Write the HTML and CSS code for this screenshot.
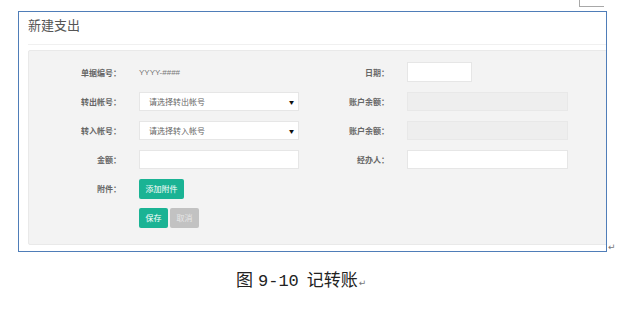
FILE: index.html
```html
<!DOCTYPE html>
<html lang="zh-CN">
<head>
    <meta charset="UTF-8">
    <title>记转账</title>
    <link rel="stylesheet" href="styles.css">
</head>
<body>
    <div class="doc">
        <div class="corner-mark"></div>

        <div class="figure-line">
            <div class="figure">
                <div class="card-title">新建支出</div>
                <div class="panel">
                    <div class="form-grid">
                        <div class="label">单据编号<span class="colon">：</span></div>
                        <div class="value">YYYY-####</div>
                        <div class="label">日期<span class="colon">：</span></div>
                        <div><div class="input input-short"></div></div>

                        <div class="label">转出帐号<span class="colon">：</span></div>
                        <div class="input select">请选择转出帐号<span class="caret">▼</span></div>
                        <div class="label">账户余额<span class="colon">：</span></div>
                        <div class="input disabled"></div>

                        <div class="label">转入帐号<span class="colon">：</span></div>
                        <div class="input select">请选择转入帐号<span class="caret">▼</span></div>
                        <div class="label">账户余额<span class="colon">：</span></div>
                        <div class="input disabled"></div>

                        <div class="label">金额<span class="colon">：</span></div>
                        <div class="input"></div>
                        <div class="label">经办人<span class="colon">：</span></div>
                        <div class="input"></div>

                        <div class="label">附件<span class="colon">：</span></div>
                        <div class="btn-row"><span class="btn btn-primary btn-wide">添加附件</span></div>
                        <div></div>
                        <div></div>

                        <div></div>
                        <div class="btn-row">
                            <span class="btn btn-primary">保存</span>
                            <span class="btn btn-muted">取消</span>
                        </div>
                    </div>
                </div>
            </div>
            <span class="para-mark">↵</span>
        </div>

        <div class="caption">图<span class="num">9-10</span><span class="name">记转账</span><span class="para-mark">↵</span></div>
    </div>
</body>
</html>
```

FILE: styles.css
```css
body {
    margin: 0;
    background: #fff;
    font-family: "Noto Sans CJK SC", "Liberation Sans", sans-serif;
}
.doc {
    position: relative;
    width: 632px;
    height: 311px;
}
.corner-mark {
    position: absolute;
    left: 579px;
    top: 0;
    width: 24px;
    height: 6px;
    border-left: 1px solid #a8a8a8;
    border-bottom: 1px solid #a8a8a8;
}
.figure-line {
    display: flex;
    align-items: flex-end;
    padding: 11px 0 0 18px;
}
.figure {
    box-sizing: border-box;
    width: 589px;
    height: 241px;
    border: 1px solid #4f7db8;
    overflow: hidden;
    padding-left: 9px;
    background: #fff;
}
.card-title {
    height: 32px;
    line-height: 26px;
    font-size: 13px;
    color: #555;
    border-bottom: 1px solid #f0f0f0;
    margin-bottom: 5px;
}
.panel {
    width: 600px;
    height: 195px;
    background: #f3f3f3;
    border: 1px solid #e9e9e9;
    border-radius: 2px;
    padding-top: 12px;
    box-sizing: border-box;
}
.form-grid {
    display: grid;
    grid-template-columns: 110px 160px 108px 161px;
    grid-auto-rows: 19px;
    row-gap: 10px;
    align-items: center;
}
.label {
    padding-right: 18px;
    text-align: right;
    font-size: 8px;
    font-weight: bold;
    color: #666;
}
.colon {
    font-family: "Noto Sans CJK TC", sans-serif;
}
.value {
    font-family: "Liberation Sans", sans-serif;
    font-size: 8px;
    color: #777;
}
.input {
    height: 19px;
    box-sizing: border-box;
    background: #fff;
    border: 1px solid #e6e6e6;
}
.input-short {
    width: 65px;
    height: 20px;
    margin-top: -1px;
}
.select {
    position: relative;
    padding-left: 9px;
    font-size: 8px;
    line-height: 17px;
    color: #666;
}
.caret {
    position: absolute;
    right: 4px;
    top: 0;
    font-size: 5px;
    color: #111;
}
.disabled {
    background: #eeeeee;
    border-color: #e8e8e8;
}
.btn-row {
    display: flex;
    gap: 2px;
}
.btn {
    display: inline-block;
    width: 29px;
    height: 20px;
    line-height: 20px;
    border-radius: 2px;
    text-align: center;
    font-size: 8px;
    color: #fff;
}
.btn-wide {
    width: 45px;
}
.btn-primary {
    background: #1ab394;
}
.btn-muted {
    background: #c2c2c2;
    color: #e6e6e6;
}
.para-mark {
    font-family: "DejaVu Sans", sans-serif;
    font-size: 9px;
    color: #777;
    margin-left: 1px;
    line-height: 9px;
}
.caption {
    display: flex;
    align-items: baseline;
    margin: 14px 0 0 236px;
    font-size: 17px;
    color: #222;
}
.num {
    font-family: "Liberation Mono", monospace;
    margin-left: 5px;
}
.name {
    margin-left: 8px;
}
```
